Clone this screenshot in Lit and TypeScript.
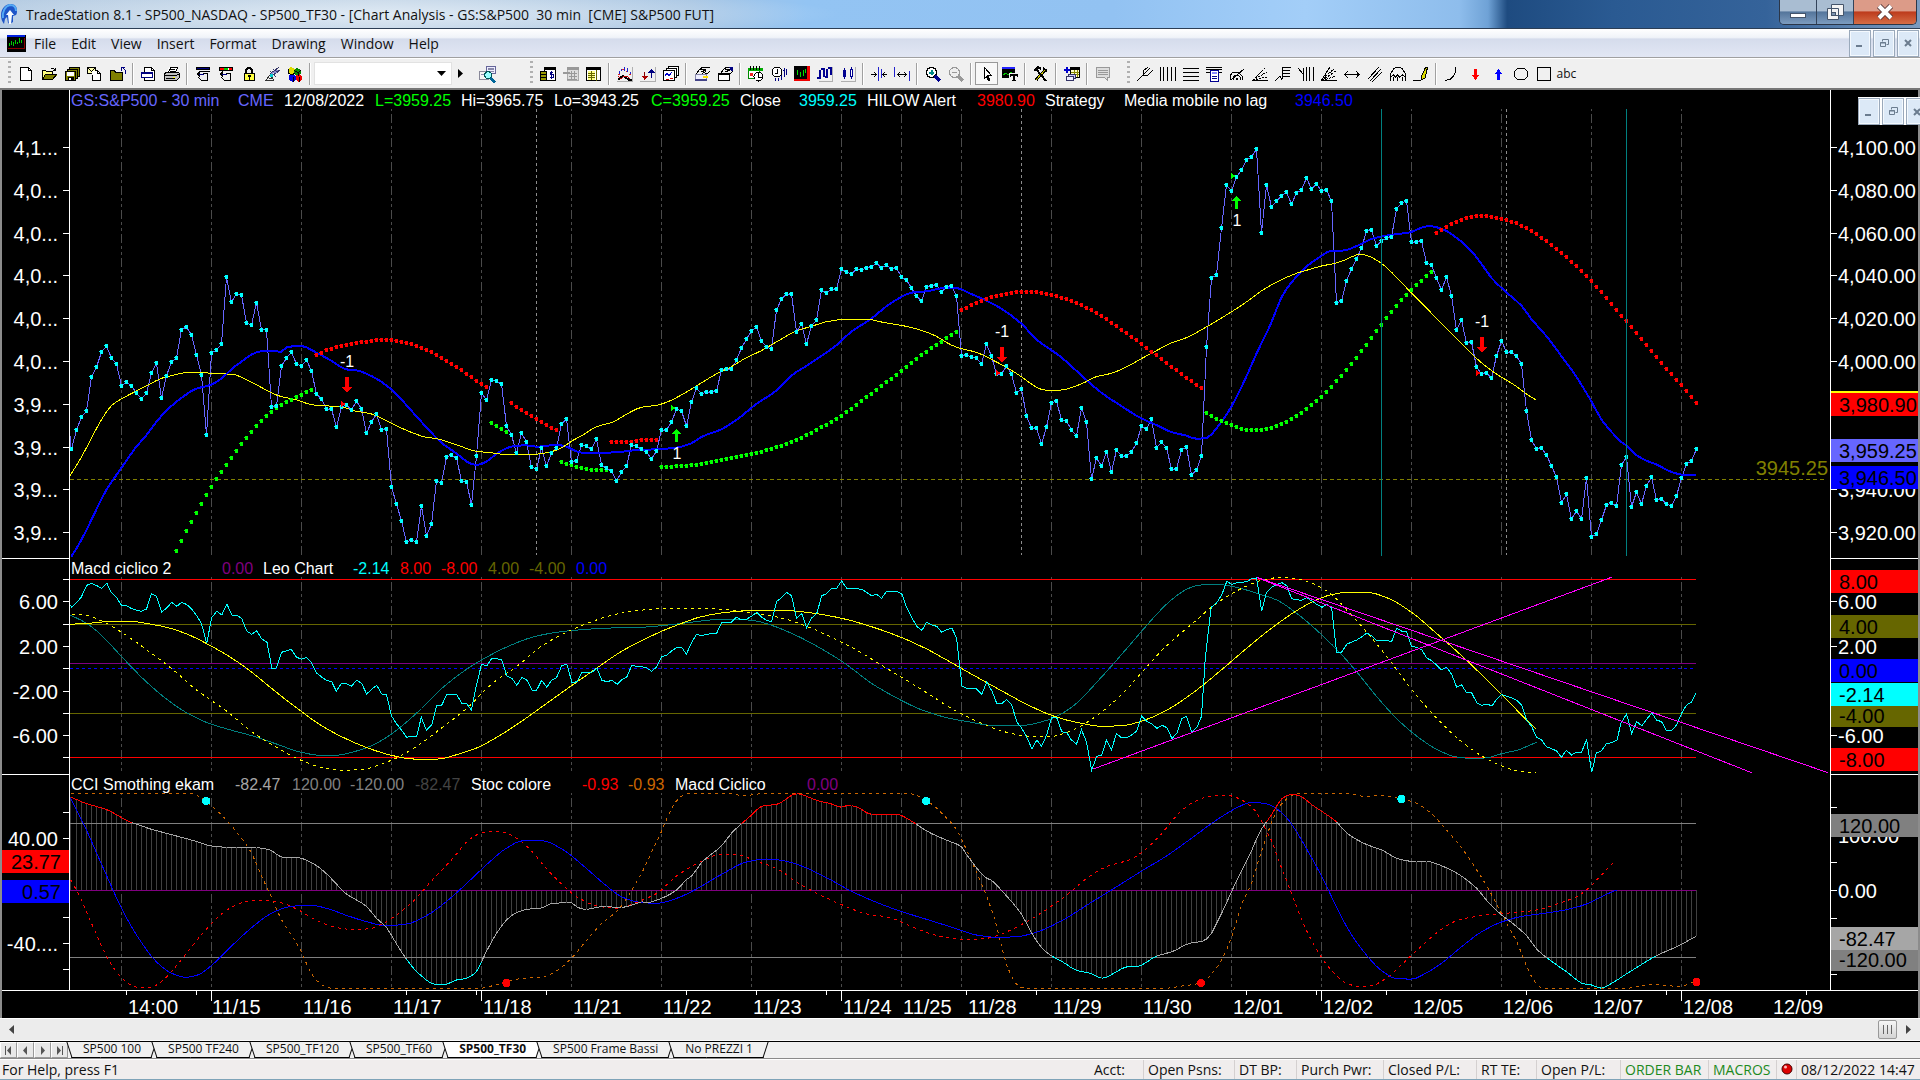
import { LitElement, html, svg, css, type TemplateResult } from "lit";
import { customElement } from "lit/decorators.js";
import { styleMap } from "lit/directives/style-map.js";

type Pt = [number, number];

/* ---------- series helpers ---------- */

// Samples are kept as flat x,y lists in thirds of a plot unit, in blocks that start at `ox`.
const upper = (ox: number, a: number[]): Pt[] => {
  const out: Pt[] = [];
  for (let i = 0; i < a.length; i += 2) out.push([a[i] / 3 + ox, a[i + 1] / 3]);
  return out;
};
const SX = 660 / 1568;
const lower = (ox: number, dy: number, a: number[]): Pt[] => {
  const out: Pt[] = [];
  for (let i = 0; i < a.length; i += 2) out.push([a[i] * SX + ox, a[i + 1] / 3 - dy]);
  return out;
};
const mid = (ox: number, a: number[]) => lower(ox, 8, a);
const low = (ox: number, a: number[]) => lower(ox, 224, a);

const BAR = 5;

// Monotone cubic through the control points, read once per bar.
function perBar(p: Pt[]): Pt[] {
  const n = p.length;
  const d = p.slice(1).map((q, i) => (q[1] - p[i][1]) / (q[0] - p[i][0]));
  const m = p.map((_, i) => {
    if (i === 0) return d[0];
    if (i === n - 1) return d[n - 2];
    return d[i - 1] * d[i] <= 0 ? 0 : (2 * d[i - 1] * d[i]) / (d[i - 1] + d[i]);
  });
  const at = (x: number) => {
    let i = 0;
    while (i < n - 2 && x > p[i + 1][0]) i++;
    const h = p[i + 1][0] - p[i][0];
    const t = (x - p[i][0]) / h;
    const t2 = t * t;
    const t3 = t2 * t;
    return (
      (2 * t3 - 3 * t2 + 1) * p[i][1] + (t3 - 2 * t2 + t) * h * m[i] +
      (3 * t2 - 2 * t3) * p[i + 1][1] + (t3 - t2) * h * m[i + 1]
    );
  };
  const out: Pt[] = [p[0]];
  const end = p[n - 1][0];
  let x = Math.ceil((p[0][0] - 1.5) / BAR) * BAR + 1.5;
  if (x - p[0][0] < 1) x += BAR;
  for (; x < end - 1; x += BAR) out.push([x, at(x)]);
  out.push(p[n - 1]);
  return out;
}

const path = (p: Pt[]) => "M" + p.map(([x, y]) => `${x.toFixed(1)} ${y.toFixed(1)}`).join("L");
const squares = (p: Pt[]) =>
  p.map(([x, y]) => {
    const l = Math.floor(x) - 1;
    const t = Math.round(y) - 2;
    return `M${l} ${t}h3v4h-3zM${l - 1} ${t + 1}h1v1h-1z`;
  }).join("");

/* ---------- price pane ---------- */

const CLOSES = [
  1077,1020,981,963,861,831,786,768,804,822,887,876,888,909,927,909,849,819,924,857,816,804,719,711,735,795,855,1035,
  789,780,762,561,636,611,615,699,705,638,719,719,951,948,828,804,786,822,828,810,843,912,927,957,957,1011,951,945,960,
  933,957,1029,996,972,1020,1017,1191,1242,1293,1356,1350,1356,1248,1338,1302,1173,1179,1101,1095,1104,1173,1176,1245,
  1098,909,930,870,873,
  882,1008,1035,1089,1029,1056,1131,1137,1074,1128,1089,1074,1002,987,1116,1113,1065,1068,1077,1047,1125,1134,1143,1173,
  1146,1128,1065,1068,1077,1086,1107,1083,1020,1020,996,957,963,1008,936,894,912,906,906,903,840,837,837,810,774,747,723,
  711,753,771,777,660,627,612,612,726,702,762,708,690,600,609,597,597,537,546,552,537,540,534,531,519,534,525,537,534,
  561,570,594,618,633,591,588,585,606,591,588,618,798,795,801,804,
  822,762,798,852,852,828,852,909,897,978,1014,1014,1062,1011,939,933,990,993,1020,1038,954,996,1167,1104,1128,1086,1146,
  1080,1098,1098,1086,1059,1008,1017,987,1074,1056,1074,1137,1137,1080,1071,1155,1140,1098,771,564,555,414,285,303,261,
  240,210,201,177,429,285,351,333,318,306,342,309,300,264,297,282,303,300,333,639,633,573,537,507,474,423,420,468,453,
  444,441,357,339,333,456,456,453,519,525,564,600,561,618,720,
  690,759,756,831,852,849,864,798,753,786,786,798,822,963,1050,1077,1074,1095,1128,1161,1239,1212,1287,1263,1287,1164,
  1341,1332,1290,1245,1239,1248,1125,1101,1251,1206,1242,1188,1161,1230,1227,1242,1248,1218,1164,1122,1113,1077,
];
const CLOSE: Pt[] = CLOSES.map((v, i) => [1.5 + BAR * i, v / 3]);

const NO_LAG = perBar([
  ...upper(-70, [214,1400,244,1350,274,1290,319,1200,364,1134,409,1070,439,1036,469,996,499,962,544,924,589,896,634,884,664,866,694,838,724,815,769,787,799,782,844,785,862,771,904,768,949,788,994,812,1039,838,1069,841,1114,858,1174,898,1234,962,1294,1028,1324,1058,1369,1090,1414,1122,1432,1125,1459,1115,1489,1092]),
  ...upper(410, [94,1070,139,1066,169,1070,229,1065,260,1070,289,1084,304,1088,379,1088,439,1084,469,1080,529,1078,589,1073,634,1060,664,1041,724,1018,769,990,829,942,889,902,939,853,979,828,1024,798,1069,766,1114,725,1174,686,1219,649,1264,621,1294,608,1339,604,1399,593,1429,594,1474,612]),
  ...upper(890, [79,632,124,656,184,701,229,748,304,802,364,856,424,908,484,948,544,985,589,1005,634,1026,679,1037,709,1046,739,1044,777,1005,814,950,859,860,889,792,934,698,964,623,994,578,1039,530,1084,498,1114,482,1144,482,1204,462,1234,447,1279,437,1354,426,1384,413,1408,408,1444,416,1489,443]),
  ...upper(1350, [154,483,184,521,214,563,259,607,304,647,334,687,379,738,424,798,469,860,514,934,544,988,574,1025,604,1056,619,1066,649,1095,679,1112,709,1123,754,1146,799,1155,829,1155]),
]);

const CENTERED = perBar([
  ...upper(-70, [210,1157,244,1102,274,1045,304,990,334,947,364,927,409,903,454,880,484,865,514,857,559,848,604,848,649,851,700,853,724,862,769,884,814,908,844,920,889,929,934,944,964,947,1024,950,1060,962,1114,972,1174,1000,1234,1027,1279,1042,1309,1046,1354,1059,1399,1075,1429,1084,1489,1090]),
  ...upper(410, [60,1093,160,1093,214,1085,244,1074,274,1054,314,1032,349,1010,394,998,439,973,484,952,529,946,559,937,604,915,649,888,709,852,754,830,799,803,844,782,889,756,949,723,994,709,1046,694,1099,688,1166,688,1204,696,1264,706,1324,721,1369,739,1414,765,1444,776]),
  ...upper(890, [49,787,94,808,139,832,184,860,214,882,244,898,274,902,304,900,364,882,409,860,454,850,499,831,544,806,589,782,634,759,679,743,739,711,799,675,859,636,904,603,949,577,1009,550,1039,541,1084,528,1129,519,1159,508,1199,493,1219,496,1264,520,1309,561,1354,609,1414,669,1444,701,1489,745]),
  ...upper(1350, [154,790,184,818,229,852,259,870,289,889,319,912,347,929]),
]);

const HIGH_RUNS = [
  upper(-70, [949,795,994,776,1039,765,1114,753,1159,749,1204,756,1264,773,1324,804,1384,840,1444,882,1459,891]),
  upper(410, [94,939,124,960,169,986,214,1013,229,1020]),
  upper(410, [394,1056,439,1056,499,1050,529,1050]),
  upper(890, [4,660,49,639,109,618,184,606,229,606,274,615,334,633,409,669,469,708,544,762,604,807,664,852,724,894]),
  upper(1350, [49,429,79,411,109,396,154,381,184,378,214,381,259,390,319,414,379,453,439,501,514,573,574,642,634,711,694,783,754,852,784,885,829,939]),
].map(perBar);

const LOW_RUNS = [
  upper(-70, [529,1383,544,1353,574,1296,604,1242,634,1191,679,1125,709,1083,754,1026,799,978,844,945,904,915,934,900]),
  upper(-70, [1474,998,1489,1008,1504,1017,1519,1026]),
  upper(410, [244,1116,289,1130,334,1140,379,1140]),
  upper(410, [544,1131,604,1128,664,1122,754,1104,814,1092,874,1077,949,1050,1009,1020,1069,987,1129,945,1189,900,1249,855,1309,807,1369,765,1429,726]),
  upper(890, [739,969,784,993,829,1011,859,1020,904,1020,949,1008,1009,978,1069,933,1114,891,1159,840,1219,765,1264,705,1309,648,1354,600,1414,546]),
].map(perBar);

const DAYS = [51, 141, 231, 321, 411, 501, 591, 681, 771, 831, 891, 981, 1071, 1161, 1251, 1341, 1431, 1521, 1611];
const SESSIONS = [466, 951, 1436];
const CYCLES = [1311, 1556];

type Trade = { x: number; tip: number; tri: Pt; label: string; ly: number };
const SELLS: Trade[] = [
  { x: 277, tip: 303, tri: [271, 314], label: "-1", ly: 271 },
  { x: 932, tip: 273, tri: [926, 283], label: "-1", ly: 241 },
  { x: 1412, tip: 263, tri: [1406, 283], label: "-1", ly: 231 },
];
const BUYS: Trade[] = [
  { x: 607, tip: 339, tri: [601, 318], label: "1", ly: 363 },
  { x: 1167, tip: 106, tri: [1161, 86], label: "1", ly: 130 },
];

/* ---------- MACD pane ---------- */

const LEO: Pt[] = [
  ...mid(-70, [165,163,170,171,180,160,193,142,206,106,218,100,228,106,242,115,254,100,264,127,277,143,289,166,301,167,313,176,325,181,336,184,348,177,360,131,372,139,384,187,396,174,408,157,420,169,432,157,444,164,456,178,468,198,479,222,491,280,503,203,515,184,527,195,539,162,551,195,562,196,574,205,586,243,598,253,610,242,622,267,634,276,646,355,657,354,669,307,681,302,692,298,704,321,716,328,728,322,740,338,752,369,764,381,776,391,788,395,799,424,811,400,823,401,835,409,847,391,859,400,871,432,883,418,895,406,907,432,918,433,930,498,942,521,955,542,966,562,978,559,990,558,1001,502,1013,541,1026,524,1037,468,1049,467,1061,434,1073,433,1085,433,1097,460,1108,460,1120,480,1132,405,1144,343,1156,348,1168,326,1180,326,1192,329,1204,378,1216,385,1228,406,1240,382,1252,391,1264,421,1275,420,1287,391,1299,412,1311,390,1322,383,1335,346,1347,344,1359,398,1371,395,1382,368,1394,367,1406,367,1418,354,1430,391,1442,395,1454,391,1466,403,1478,388,1489,382,1501,346,1513,349]),
  ...mid(570, [0,349,15,353,28,364,40,350,51,320,63,316,75,303,87,293,99,292,110,313,122,279,134,253,146,257,158,253,170,251,182,250,194,217,206,217,217,217,229,202,241,210,253,208,265,199,277,187,289,201,301,212,313,214,325,154,336,143,348,127,360,137,372,205,384,190,396,233,408,204,420,190,432,137,443,131,455,115,467,115,479,93,491,115,503,115,515,116,527,118,539,128,550,137,562,133,574,145,586,123,598,123,610,124,622,132,634,174,646,204,658,230,670,241,681,217,693,225,705,229,717,247,729,239,741,234,752,264,765,408,776,415,788,415,800,417,812,433,824,396,836,423,848,461,860,460,871,449,883,464,895,515,907,535,919,562,931,596,943,570,954,589,966,555,978,503,990,503,1002,545,1014,548,1025,570,1037,582,1049,539,1061,577,1073,661,1085,619,1097,615,1108,571,1120,599,1132,551,1144,563,1156,563,1168,555,1180,543,1192,499,1204,514,1216,522,1228,535,1240,526,1252,533,1264,566,1276,548,1288,505,1298,499,1311,547,1323,532,1334,499,1343,323,1357,172,1370,158,1382,135,1394,94,1406,103,1418,98,1430,97,1442,95,1453,86,1465,84,1477,184]),
  ...mid(1190, [15,128,28,112,40,104,52,98,64,108,75,146,87,149,99,151,111,143,123,153,135,163,147,172,159,163,170,173,182,308,194,306,206,283,218,276,230,270,242,260,254,249,266,258,278,273,289,272,301,272,313,274,325,235,336,243,348,245,360,289,372,292,384,299,396,324,408,332,420,346,431,359,443,352,455,372,467,411,479,405,490,427,503,429,515,458,527,466,539,462,551,468,562,448,574,433,586,439,598,444,610,451,622,466,634,513,645,528,657,562,669,570,681,591,693,596,705,603,716,622,728,601,740,615,752,606,764,606,776,569,788,667,799,609,811,603,823,581,835,578,848,571,858,518,871,492,883,550,895,515,907,527,919,507,931,489,942,510,954,515,966,542,978,542,990,524,1002,489,1013,466,1025,456,1036,430]),
];
const SLOW = perBar([
  ...mid(-70, [165,223,220,219,265,214,312,214,350,221,393,231,444,252,491,281,540,316,586,355,646,416,705,474,764,527,823,567,883,598,930,616,966,625,1010,629,1050,626,1085,614,1132,594,1180,562,1240,513,1299,460,1359,406,1418,354,1478,303]),
  ...mid(570, [0,275,51,244,99,220,146,200,206,187,265,182,348,182,408,189,479,205,550,230,622,263,681,297,741,339,800,381,860,423,919,463,978,496,1037,517,1100,529,1150,526,1204,508,1252,480,1311,431,1382,359,1442,294,1501,234]),
  ...mid(1190, [87,182,130,152,170,134,206,127,254,127,301,143,360,187,420,251,479,317,539,390,598,465,640,518,657,538]),
]);
const LEAD = perBar([
  ...mid(-70, [172,193,200,195,240,212,289,247,348,299,408,356,468,421,539,484,598,545,657,592,716,631,764,652,811,661,859,659,900,645,942,624,990,589,1049,534,1108,476,1168,402,1228,349,1287,288,1347,246,1406,215,1466,192]),
  ...mid(570, [0,181,51,176,110,174,200,178,265,188,336,204,396,229,455,262,515,300,574,346,634,391,693,438,752,484,812,520,871,547,919,558,975,560,1010,549,1050,526,1097,486,1144,434,1180,385,1204,350,1252,286,1311,222,1370,160,1430,115,1480,90]),
  ...mid(1190, [52,82,90,87,125,100,170,133,206,180,254,247,301,319,360,418,420,505,479,575,539,627,590,655,625,666,657,667]),
]);
const CYCLE = perBar([
  ...mid(-70, [165,194,206,220,242,257,289,320,348,396,408,459,456,497,503,523,551,541,598,557,657,582,716,607,764,616,799,616,835,607,883,587,930,552,990,489,1049,416,1097,368,1144,330,1204,291,1264,262,1322,247,1394,238,1478,233]),
  ...mid(570, [0,232,60,226,120,217,182,209,230,208,275,213,313,226,372,257,432,297,491,344,550,400,610,444,670,480,729,503,788,517,835,526,907,526,966,511,1002,491,1037,460,1085,397,1132,331,1180,261,1228,192,1264,148,1300,117,1330,105,1370,103,1420,113]),
  ...mid(1190, [0,133,40,150,87,190,135,241,182,298,230,366,278,441,325,506,372,558,420,598,467,621,500,625,536,624,574,611,610,601,640,586,657,577]),
]);
const TRENDS: Pt[][] = [
  [...mid(570, [1075, 658]), ...mid(1190, [835, 82])],
  [...mid(570, [1465, 82]), ...mid(1190, [1350, 668])],
  [...mid(570, [1465, 82]), ...mid(1190, [1168, 668])],
];

/* ---------- CCI pane ---------- */

const CCI = perBar([
  ...low(-70, [168,741,206,761,254,779,289,803,313,818,330,825,360,838,408,854,468,875,503,888,527,891,598,892,640,899,669,921,705,922,740,938,764,958,788,987,823,1032,847,1050,870,1068,895,1106,918,1132,930,1156,955,1208,990,1265,1037,1304,1055,1304,1085,1290,1108,1285,1132,1265,1150,1218,1168,1175,1192,1127,1216,1096,1252,1078,1287,1074,1311,1060,1359,1058,1375,1075,1394,1078,1430,1070,1478,1072,1513,1060]),
  ...low(570, [0,1055,15,1058,51,1045,87,1020,110,989,122,979,146,938,194,887,217,850,265,795,290,768,325,763,372,731,420,751,455,762,480,772,495,766,515,771,550,793,610,793,646,814,681,843,729,871,764,890,776,914,824,985,836,992,860,1023,907,1094,931,1150,954,1193,978,1218,1002,1234,1037,1261,1073,1271,1097,1285,1120,1274,1156,1251,1180,1250,1228,1218,1264,1205,1311,1178,1335,1175,1355,1155,1370,1120,1394,1057,1418,990,1453,902]),
  ...low(1190, [0,845,28,793,52,746,75,733,95,738,123,764,182,816,206,849,254,884,289,900,330,927,360,934,400,935,431,947,467,969,515,1015,539,1052,574,1095,598,1118,634,1158,657,1197,681,1223,728,1265,770,1302,788,1305,811,1315,835,1300,883,1262,942,1217,990,1190,1036,1159]),
]);
const STOCH = perBar([
  ...low(-70, [168,745,206,842,242,945,289,1075,325,1156,372,1236,408,1270,440,1282,468,1276,503,1246,551,1187,598,1133,646,1089,692,1069,740,1066,776,1075,823,1096,871,1115,918,1127,966,1122,1013,1097,1061,1054,1108,1001,1156,944,1204,894,1240,873,1287,872,1335,897,1382,943,1430,996,1478,1041]),
  ...low(570, [0,1057,40,1060,87,1045,134,1017,194,973,253,936,300,927,336,931,384,948,443,983,503,1024,562,1057,622,1085,681,1108,741,1132,800,1155,848,1162,895,1160,943,1146,1002,1112,1061,1066,1120,1020,1192,963,1252,917,1311,864,1370,810,1420,772,1453,757,1490,762,1525,788,1548,822,1568,862]),
  ...low(1190, [110,895,147,980,170,1040,206,1130,242,1198,289,1262,325,1286,360,1287,396,1268,431,1240,479,1190,527,1145,574,1116,622,1099,669,1091,728,1079,776,1062,811,1040,847,1020]),
]);
const FAST = perBar([
  ...low(-70, [168,990,190,1040,218,1122,254,1220,289,1284,325,1312,355,1314,384,1294,420,1246,468,1170,503,1120,539,1080,586,1055,622,1051,657,1055,705,1077,752,1111,799,1133,847,1139,883,1135,930,1105,978,1058,1025,993,1073,929,1120,864,1156,845,1192,846,1228,865,1264,905,1299,957,1335,1003,1370,1040,1418,1068,1466,1075,1502,1063]),
  ...low(570, [0,1053,40,1030,87,978,146,934,190,914,230,914,277,934,325,956,372,996,420,1030,479,1064,539,1092,590,1102,646,1130,700,1155,764,1168,812,1167,848,1157,895,1131,943,1097,990,1057,1025,1024,1061,985,1108,950,1168,927,1204,895,1240,850,1276,795,1311,759,1347,741,1394,736,1430,750,1465,787]),
  ...low(1190, [10,830,25,865,50,950,75,1030,99,1110,135,1200,170,1262,206,1300,240,1310,266,1307,301,1284,336,1244,384,1188,431,1138,467,1112,515,1099,562,1092,610,1087,657,1080,705,1062,752,1040,776,1020,811,975,843,934]),
]);
const SWING = perBar([
  ...low(-70, [168,730,455,730,480,745,503,768,539,812,574,865,598,910,622,980,646,1045,669,1110,692,1155,716,1205,740,1272,764,1304,788,1315,1140,1315,1168,1308,1204,1296,1240,1285,1287,1281,1322,1263,1359,1223,1394,1170,1430,1120,1466,1083,1489,1045,1513,995]),
  ...low(570, [0,980,28,905,51,845,75,775,99,738,122,730,206,731,250,737,290,731,640,731,665,740,693,762,729,805,752,838,776,900,800,968,824,1040,848,1130,866,1225,883,1280,905,1313,930,1315,1245,1315,1288,1308,1335,1298,1358,1272,1382,1230,1406,1160,1430,1060,1453,1000,1465,950]),
  ...low(1190, [10,880,30,810,52,760,75,737,90,731,206,731,250,739,290,737,336,747,372,760,408,792,443,840,479,893,503,937,530,990,555,1045,586,1120,610,1175,634,1250,650,1290,670,1315,870,1315,930,1303,1002,1310,1020,1300,1036,1296]),
]);
const ZERO = 116;
const UP = 49;
const DOWN = 183;
const cciPart = (test: (y: number) => boolean) =>
  CCI.slice(1).map((q, i) => {
    const p = CCI[i];
    return test((p[1] + q[1]) / 2) ? path([p, q]) : "";
  }).join("");
const CCI_HIGH = cciPart((y) => y < UP);
const CCI_LOW = cciPart((y) => y > DOWN);
const CCI_MID = cciPart((y) => y >= UP && y <= DOWN);
const CCI_BARS = CCI.map(([x, y]) => `M${x.toFixed(1)} ${ZERO}V${y.toFixed(1)}`).join("");
const TOP_DOTS = [...low(-70, [490, 753]), ...low(570, [680, 753]), ...low(1190, [336, 747])];
const LOW_DOTS = [...low(-70, [1203, 1299]), ...low(570, [1333, 1299]), ...low(1190, [1037, 1296])];

/* ---------- axes ---------- */

type Mark = { y: number; text?: string; tone?: string };
const PRICE_L: Mark[] = ["4,1...", "4,0...", "4,0...", "4,0...", "4,0...", "4,0...", "3,9...", "3,9...", "3,9...", "3,9..."]
  .map((text, i) => ({ y: 57 + Math.round(i * 42.8), text }));
const PRICE_R: Mark[] = [
  ...["4,100.00", "4,080.00", "4,060.00", "4,040.00", "4,020.00", "4,000.00", "", "", "3,940.00", "3,920.00"]
    .map((text, i) => ({ y: 57 + Math.round(i * 42.8), text }))
    .filter((m) => m.text),
  { y: 312, text: "", tone: "yellow" },
  { y: 314, text: "3,980.90", tone: "red" },
  { y: 360, text: "3,959.25", tone: "violet" },
  { y: 387, text: "3,946.50", tone: "blue" },
];
const MACD_L: Mark[] = [
  { y: 21 }, { y: 43, text: "6.00" }, { y: 66 }, { y: 88, text: "2.00" }, { y: 110 }, { y: 133, text: "-2.00" },
  { y: 155 }, { y: 177, text: "-6.00" }, { y: 199 },
];
const MACD_R: Mark[] = [
  { y: 43, text: "6.00" }, { y: 88, text: "2.00" }, { y: 177, text: "-6.00" },
  { y: 23, text: "8.00", tone: "red" }, { y: 68, text: "4.00", tone: "olive" }, { y: 112, text: "0.00", tone: "blue" },
  { y: 157, text: "-4.00", tone: "olive" }, { y: 136, text: "-2.14", tone: "cyan" }, { y: 201, text: "-8.00", tone: "red" },
];
const CCI_L: Mark[] = [
  { y: 38 }, { y: 64, text: "40.00" }, { y: 143 }, { y: 169, text: "-40...." }, { y: 195 },
  { y: 87, text: "23.77", tone: "red" }, { y: 117, text: "0.57", tone: "blue" },
];
const CCI_R: Mark[] = [
  { y: 33 }, { y: 61, text: "100.00" }, { y: 88 }, { y: 116, text: "0.00" }, { y: 144 }, { y: 172 }, { y: 200 },
  { y: 51, text: "120.00", tone: "gray" }, { y: 185, text: "-120.00", tone: "gray" }, { y: 164, text: "-82.47", tone: "silver" },
];

const DATES: [number, string][] = [
  [58, "14:00"], [142, "11/15"], [233, "11/16"], [323, "11/17"], [413, "11/18"], [503, "11/21"], [593, "11/22"],
  [683, "11/23"], [773, "11/24"], [833, "11/25"], [898, "11/28"], [983, "11/29"], [1073, "11/30"], [1163, "12/01"],
  [1253, "12/02"], [1343, "12/05"], [1433, "12/06"], [1523, "12/07"], [1613, "12/08"], [1703, "12/09"],
];
const MINOR = [56, 126, 336, 406, 476, 616, 686, 756, 896, 966, 1176, 1246, 1316, 1456, 1526, 1596, 1736];
const MAJOR = [141, 411, 771, 1251, 1611];

type Item = [string, string];
const PRICE_HEAD: Item[] = [
  ["GS:S&P500 - 30 min", "violet"], ["CME", "violet"], ["12/08/2022", "white"], ["L=3959.25", "lime"],
  ["Hi=3965.75", "white"], ["Lo=3943.25", "white"], ["C=3959.25", "lime"], ["Close", "white"], ["3959.25", "cyan"],
  ["HILOW Alert", "white"], ["3980.90", "red"], ["Strategy", "white"], ["Media mobile no lag", "white"], ["3946.50", "blue"],
];
const MACD_HEAD: Item[] = [
  ["Macd ciclico 2", "white"], ["0.00", "purple"], ["Leo Chart", "white"], ["-2.14", "cyan"], ["8.00", "red"],
  ["-8.00", "red"], ["4.00", "olive"], ["-4.00", "olive"], ["0.00", "blue"],
];
const CCI_HEAD: Item[] = [
  ["CCI Smothing ekam", "white"], ["-82.47", "silver"], ["120.00", "gray"], ["-120.00", "gray"], ["-82.47", "dim"],
  ["Stoc colore", "white"], ["-0.93", "red"], ["-0.93", "orange"], ["Macd Ciclico", "white"], ["0.00", "purple"],
];

/* ---------- toolbar icons, 16 x 16 ---------- */

const K = "#000";
const line = (d: string, c = K, w = 1) => svg`<path d=${d} fill="none" stroke=${c} stroke-width=${w}></path>`;
const fill = (d: string, c = K) => svg`<path d=${d} fill=${c}></path>`;
const box = (x: number, y: number, w: number, h: number, f = "#fff", s = K) =>
  svg`<rect x=${x + 0.5} y=${y + 0.5} width=${w - 1} height=${h - 1} fill=${f} stroke=${s}></rect>`;

const ICON: Record<string, () => unknown> = {
  new: () => svg`${fill("M2 1h9l3 3v11H2z", "#fff")}${line("M2.5 1.5h8l3 3v10h-11zM10.5 1.5v3h3")}`,
  open: () => svg`${fill("M1 5h4l1 1h6v3H4l-3 5z", "#ffff80")}${fill("M4 9h12l-4 5H1z", "#808000")}${line("M1.5 13.5v-9h3l1 1h6v3M4.5 8.5h11l-4 5h-10zM9.5 2.5h3l2 2M14.5 1.5v3h-3")}`,
  save: () => svg`${box(5, 1, 11, 10, "#808000")}${box(3, 3, 11, 10, "#808000")}${box(1, 5, 11, 10, "#808000")}${fill("M3 6h7v4H3z", "#fff")}${fill("M4 11h6v4H4z")}${fill("M5 12h2v2H5z", "#fff")}`,
  mail: () => svg`${box(0, 1, 9, 7, "#ffffb0")}${line("M.5 1.5l4 4 4-4")}${fill("M5 5h6l3 3v7H5z", "#fff")}${line("M5.5 14.5v-6M5.5 14.5h8v-7l-3-3h-2M10.5 4.5v3h3")}`,
  folder: () => svg`${fill("M0 5h5l1 2h7v8H0z", "#808000")}${line("M.5 14.5v-10h4l1 2h7v8z")}${line("M15.5 7.5v-3l-3-3M11.5 4.5v-3h3", "#000080")}`,
  page: () => svg`${fill("M3 1h8l3 3v11H3z", "#fff")}${line("M3.5 1.5h7l3 3v10h-10zM10.5 1.5v3h3")}${box(0, 6, 12, 6, "#fff", "#000080")}${fill("M0 6h12v2H0z", "#000080")}`,
  print: () => svg`${fill("M5 1h9l-2 6H3z", "#fff")}${line("M4.5 6.5l2-5h7l-2 5M6 3.5h5M5.5 5.5h5")}${fill("M1 7h14v5l-3 3H1z", "#c0c0c0")}${line("M.5 7.5l2-1h12l1 1v4l-3 3h-12zM.5 9.5h12l3-2M2 12.5h9")}${fill("M9 11h2v1H9z", "#ff0")}`,
  undo1: () => svg`${box(1, 1, 14, 3, "#000080", K)}${line("M4 5.500h11M7.500 7.500h5v7h-6l-3-3")}${fill("M1 8l4-3v6z")}${line("M4 8.500h5", "#000080")}`,
  undo2: () => svg`${box(1, 1, 14, 4, "#fff", K)}${fill("M2 2h4v2H2z", "#f00")}${fill("M6 2h4v2H6z", "#0c0")}${fill("M11 2h3v2h-3z", "#f00")}${line("M7.500 7.500h5v7h-6l-3-3")}${fill("M1 8l4-3v6z")}${line("M4 8.500h5", "#000080")}`,
  lock: () => svg`${line("M5 8V4L6.500 2h3L11 4V8", K, 2)}${box(3, 7, 11, 8, "#ffff40")}${fill("M7 9h3v2H9v3H8v-3H7z")}`,
  dish: () => svg`${line("M1 14.500h9M2 14l4-5 4 5M5 12h4", "#333")}${line("M6 8l9-7M8 10l8-6M6 5l6 6M9 3l5 4", "#336")}${line("M8 6l5 1M7 8l7-4", "#8888cc")}${fill("M6 8h3v3H6z", "#0cc")}`,
  cubes: () => svg`${fill("M1 3l3-2 4 2v4L5 9 1 7z", "#dd0")}${fill("M7 4l3-2 4 2v4l-3 2-4-2z", "#080")}${fill("M2 9l3-1 4 2v4l-3 2-4-2z", "#00d")}${fill("M9 9l3-1 3 2v4l-3 2-3-2z", "#e00")}${line("M1.500 3v4l3.500 2 3-2M7 4.500l4 2 3-2M11 6.500V10M6 11v5M12 11v5")}`,
  find: () => svg`${box(1, 5, 9, 8, "#f4f4f4", "#889")}${box(7, 1, 9, 7, "#eef", "#669")}${line("M9 3.500h5M9 5.500h5M3 8.500h4", "#88a")}<circle cx="9" cy="9" r="3" fill="#9ff" stroke="#055"></circle>${line("M11 11.500l4 4", "#069", 2)}`,
  money: () => svg`${box(4, 1, 12, 14, "#fff")}${fill("M4 1h12v3H4z")}${fill("M1 6h6v2H1zM1 9h6v2H1zM1 12h6v2H1z", "#990")}${line("M.500 5.500h6v9h-6zM1 8.500h6M1 11.500h6")}${line("M13 6.500h-3v2h3v3h-3M11.500 5v8", "#000080")}`,
  gridoff: () => svg`${box(4, 1, 12, 14, "#ddd", "#aaa")}${fill("M4 1h12v3H4z", "#999")}${fill("M0 6h7v2H0z", "#999")}${line("M6 7.500h8M6 10.500h8M8.500 5v9M11.500 5v9M4 13.500h10", "#999")}`,
  table: () => svg`${box(0, 1, 15, 14, "#fff")}${fill("M0 1h15v3H0z")}${fill("M2 5h7v9H2z", "#ff8")}${line("M2 7.500h7M2 9.500h7M2 11.500h7M5.500 5v9M10.500 4v11", "#660")}`,
  wave: () => svg`${line("M0 15.500h15.500V1", "#b0b0b0")}${line("M2.500 8v-3M4.500 5V3M7.500 5V1M10.500 6V2M13.500 9V6", "#22c")}${line("M1 8.500h2M5 3.500h2M9 5.500h1M12 8.500h2", "#d22")}${line("M1 14l3-3 2-1 2 1 4 3h3", K, 2)}${line("M1 10l3 3 3-3 3 0 3 3", "#b00")}`,
  updown: () => svg`${line("M0 15.500h15.500V1", "#b0b0b0")}${line("M4.500 6v6", "#800")}${fill("M2 10h6l-3.500 4z", "#a00")}${line("M11.500 12V4", "#000080")}${fill("M8 7h7l-3.500-4z", "#000080")}`,
  stack: () => svg`${box(5, 0, 11, 10)}${box(3, 2, 11, 10)}${box(0, 4, 12, 11)}${line("M2 10l2-3 2 3 3-4", "#00c")}${line("M3 13.500h3M7 12.500h3", "#c00")}`,
  props: () => svg`${box(1, 8, 12, 7, "#eef", "#88a")}${line("M2 8l4-5 3-2h5l2 1v3l-3 3-2-1M6 4l6-1M7 6l5-2M8 7.500l4-2")}${fill("M9 10h5v2H9z", "#fd0")}${fill("M1 13h12v2H1z", "#448")}`,
  prop2: () => svg`${box(1, 7, 12, 8)}${fill("M1 7h12v2H1z")}${line("M4 7l3-4 3-2h4l2 2v2l-3 3-2-1M8 4l5-1M8 6l5-2")}${fill("M12 1h4v4h-2z", "#000080")}`,
  cal: () => svg`${box(0, 2, 12, 11, "#fff", "#080")}${fill("M0 2h15v3H0z", "#0a0")}${line("M2.500 0v4M5.500 0v4M8.500 0v4M11.500 0v4")}${fill("M2 7h3v3H2z", "#e22")}<circle cx="10.500" cy="10.500" r="4.500" fill="#fff" stroke="#000"></circle>${line("M10.500 7v4h3")}`,
  clock: () => svg`<circle cx="6" cy="6" r="5" fill="#fff" stroke="#000"></circle>${line("M6.500 3v4h-3")}${line("M4.500 12v3M7.500 12v3M10.500 9v5M13.500 2v9M15.500 3v6M12 4.500h2", "#000080")}`,
  chart: () => svg`${fill("M0 0h16v15H0z", "#e00")}${fill("M0 0h13v13H0z")}${line("M3.500 4v5M6.500 6v5M9.500 4v6M11.500 3v4", "#0d0")}`,
  notes: () => svg`${line("M2 15.500h13.500V1", "#b0b0b0")}${fill("M2 4h2v9H2zM6 2h2v9H6zM9 3h2v9H9zM13 1h2v8h-2zM0 11h3v2H0zM4 2h3v2H4zM8 10h3v2H8zM11 1h3v2h-3z", "#000090")}`,
  candle: () => svg`${line("M1 15.500h14.500V1", "#b0b0b0")}${line("M4.500 2v11M11.500 1v12", "#000090")}${fill("M3 4h3v7H3z", "#000090")}${box(10, 3, 3, 8, "#fff", "#000090")}`,
  squeeze: () => svg`${line("M7.500 1v14", "#22c")}${line("M10.500 3v9", "#22c")}${line("M0 8.500h5M11 8.500h5M3 6l2.500 2.500L3 11M14 6l-2 2.500 2 2.500")}`,
  stretch: () => svg`${line("M.500 1v10M15.500 5v10", "#22c")}${line("M3 8.500h10M6 6L3.500 8.500 6 11M10 6l2.500 2.500L10 11")}`,
  zoomin: () => svg`<circle cx="6.500" cy="6.500" r="5" fill="#fff" stroke="#000" stroke-width="1.500"></circle>${line("M4 6.500h5M6.500 4v5", "#088", 2)}${line("M10 10l5 5", "#000090", 3)}`,
  zoomout: () => svg`<circle cx="6.500" cy="6.500" r="5" fill="#eee" stroke="#999"></circle>${line("M4 6.500h5", "#999")}${line("M10 10l5 5", "#999", 3)}`,
  pointer: () => svg`${fill("M5 1l8 8H9l2 5-2 1-2-5-2 2z", "#fff")}${line("M5.500 1.500v11l2-2 2 4h1v-1l-2-4h4z")}`,
  textchart: () => svg`${fill("M0 1h13v11H0z")}${fill("M0 1h13v2H0z", "#22f")}${line("M1 9l3-2 2 2 4-3", "#0c0")}${fill("M7 7h9v9H7z", "#f0f0f0")}${fill("M8 8h8v3h-1v-1h-2v4h1v1h-4v-1h1v-4H9v1H8z")}`,
  tools: () => svg`${line("M3 14L12 4", K, 3)}${line("M3 14L12 4", "#cc0", 1)}${line("M3 3l10 12", K, 2)}${line("M1 5l4-4 3 2M10 2l4 3", K, 2)}`,
  report: () => svg`${box(6, 1, 10, 11, "#ffc")}${fill("M7 2h8v2H7z")}${line("M7 6.500h8M7 8.500h8M10.500 4v7M13.500 4v7", "#880")}${line("M0 4h6M3 1v6", "#00c", 2)}${box(4, 8, 8, 5, "#ccf", "#336")}${box(2, 10, 8, 5, "#eef", "#336")}`,
  memo: () => svg`${fill("M1 1h14v11h-3v3l-3-3H1z", "#ddd")}${line("M1.500 1.500h13v10h-2v3l-3-3h-8zM3 4.500h10M3 6.500h10M3 8.500h10", "#999")}`,
  fork: () => svg`${line("M0 15L6 9M6 9l5 0 5-5M6 9V5l5-4M6 9l7-7")}`,
  vlines: () => svg`${line("M.500 1v14M3.500 1v14M7.500 1v14M11.500 1v14M15.500 1v14")}`,
  hlines: () => svg`${line("M0 2.500h16M0 6.500h16M0 10.500h16M0 14.500h16")}`,
  calc: () => svg`${line("M0 1.500h16M0 3.500h16M0 6.500h16")}${box(4, 4, 9, 12, "#fff", "#000090")}${fill("M6 6h5v2H6z", "#88f")}${line("M6 10.500h5M6 12.500h5", "#000090")}`,
  arcs: () => svg`${line("M1 14V10l3-4h5l4 4v4M4 14v-3l2-2h3l2 2v3M2 14L15 3")}${line("M7 14v-2h1v2")}`,
  fan: () => svg`${line("M0 14.500h15.500")}<path d="M1 14L14 1M1 14L15 6M1 14l14-3" fill="none" stroke="#000" stroke-dasharray="2 1"></path>`,
  steps: () => svg`${line("M0 15l5-5 2 4M7.500 13V1M7.500 1.500h8M8 4.500h7M8 7.500h7M8 10.500h7")}`,
  vsplit: () => svg`${line("M0 2l5 6M5.500 2v13M8.500 1v14M11.500 1v14M15.500 1v14")}`,
  gann: () => svg`${line("M0 14.500h16M0 15L9 1")}<path d="M0 15L15 5M0 15L15 10M1 13L13 3" fill="none" stroke="#000" stroke-dasharray="3 1"></path>`,
  width: () => svg`${line("M1 8.500h14M4 5L1 8.500 4 12M12 5l3 3.500L12 12")}`,
  para: () => svg`${line("M1 13L12 1M3 15L14 3M5 16L15 6")}`,
  arch: () => svg`${line("M.500 15V8l3-5 3-2h3l3 2 3 5v7M.500 11l3-2 2 2 2-2 2 2 3-2 3 2M3.500 11v4M7.500 11v4M12.500 11v4")}`,
  pencil: () => svg`${fill("M8 11L12 1h3l-3 11-3 2z", "#dd0")}${line("M8 11L12.500 1.500h2L12 12l-4 2zM0 14.500h8")}`,
  curve: () => svg`${line("M11.500 1v5l-2 4-3 3-5 1.500")}`,
  down: () => svg`${fill("M7 3h3v6h2l-3.500 5L5 9h2z", "#f00")}`,
  up: () => svg`${fill("M7 14h3V8h2L8.500 3 5 8h2z", "#00f")}`,
  oval: () => svg`<ellipse cx="8" cy="8" rx="7" ry="6" fill="none" stroke="#000"></ellipse>`,
  rect: () => svg`${line("M1.500 1.500h13v13h-13z")}`,
};

const TOOLS_A = [["new", "open", "save", "mail", "folder"], ["page", "print"], ["undo1", "undo2", "lock", "dish", "cubes"]];
const TOOLS_B = [
  ["money", "gridoff", "table"], ["wave", "updown", "stack"], ["props", "prop2"],
  ["cal", "clock", "chart", "notes", "candle"], ["squeeze", "stretch"], ["zoomin", "zoomout"],
  ["pointer", "textchart"], ["tools"], ["report"], ["memo"],
];
const TOOLS_C = [
  ["fork", "vlines", "hlines", "calc", "arcs", "fan", "steps", "vsplit", "gann", "width", "para", "arch", "pencil"],
  ["curve", "down", "up", "oval", "rect", "abc"],
];

const MENU = ["File", "Edit", "View", "Insert", "Format", "Drawing", "Window", "Help"];
const SHEETS = ["SP500 100", "SP500 TF240", "SP500_TF120", "SP500_TF60", "SP500_TF30", "SP500 Frame Bassi", "No PREZZI 1"];

@customElement("app-root")
export class AppRoot extends LitElement {
  static styles = css`
    :host { display: block; }
    * { box-sizing: border-box; }
    button { font: inherit; color: inherit; padding: 0; margin: 0; border: 0; background: none; }
    svg { display: block; }
    .app {
      display: flex; flex-direction: column; height: 100vh; overflow: hidden;
      font-family: "Open Sans", "Noto Sans", sans-serif; font-size: 14px; color: #111; background: #f0f0f0;
    }

    .title {
      display: flex; align-items: flex-start; height: 29px; flex: none; padding-right: 3px; border-bottom: 1px solid #2c3e55;
      background:
        radial-gradient(ellipse 460px 26px at 380px 14px, rgb(235 243 250 / 75%), transparent),
        linear-gradient(90deg, #b4cbe2 0, #bdd0e3 20%, #a6c4e2 36%, #93c4f3 42%, #92c2f2 58%, #a3cef8 68%, #8ebdec 76%,
          #6fa2d6 77.5%, #1e4b80 78.5%, #2a5a92 84%, #35639a 92%, #7c9cc0 100%);
    }
    .logo { margin: 3px 8px 0 1px; }
    .name { flex: 1; line-height: 30px; height: 28px; white-space: pre; }
    .caption { display: flex; height: 25px; border: 1px solid #2b3648; border-top: 0; border-radius: 0 0 5px 5px; overflow: hidden; }
    .caption button { display: grid; place-items: center; width: 37px; border-right: 1px solid #33435a; background: linear-gradient(#a9bdd2 45%, #54759b 50%, #7d9cbf); }
    .caption .close { width: 62px; border-right: 0; background: linear-gradient(#dc9b88 45%, #bd3b1c 50%, #d66d45); }

    .menubar { display: flex; align-items: center; height: 29px; flex: none; border-bottom: 1px solid #a0a0a0; background: linear-gradient(#fff 0, #f0f3f9 30%, #d5dcec 36%, #e2e7f4 100%); }
    .menubar nav { display: flex; flex: 1; gap: 15px; margin-left: 8px; padding-top: 2px; }
    .menubar nav button { line-height: 24px; }
    .app-icon { margin-left: 7px; }
    .mdi { display: flex; gap: 2px; }
    .mdi button { display: grid; place-items: center; width: 22px; height: 27px; border: 1px solid #9aa9bb; background: #dce9f7; box-shadow: inset 0 0 0 1px #f4f9fe; }
    .menubar .mdi { margin-right: 1px; }

    .tools { display: flex; align-items: center; height: 32px; flex: none; padding-left: 8px; border-top: 1px solid #fff; border-bottom: 2px solid #777; background: #f0f0f0; }
    .grip { width: 3px; height: 25px; margin-right: 3px; background: repeating-linear-gradient(#b0b0b0 0 2px, transparent 2px 5px); }
    .sep { width: 2px; height: 22px; margin: 0 3px; flex: none; border-left: 1px solid #a0a0a0; border-right: 1px solid #fff; }
    .tool { display: grid; place-items: center; width: 23px; height: 23px; flex: none; }
    .tool.pressed { border: 1px solid #999; background: #f8f8f8; }
    .tool.abc { font-size: 12px; }
    .combo { position: relative; width: 138px; height: 23px; }
    .combo select { width: 100%; height: 100%; appearance: none; border: 1px solid #e2e2e2; background: #fff; }
    .combo svg { position: absolute; right: 5px; top: 9px; pointer-events: none; }
    .play { width: 18px; }
    .find { margin-left: 5px; }
    .gap-b { margin-left: 32px; }
    .gap-c { margin-left: 13px; }

    .chart {
      position: relative; flex: 1; min-height: 0; display: grid; padding: 0 2px; background: #8c8c8c;
      grid-template-columns: 68px minmax(0, 1fr) 88px;
      grid-template-rows: minmax(0, 468fr) minmax(0, 216fr) minmax(0, 216fr) 28px;
      font-family: "Liberation Sans", Arial, sans-serif; font-size: 20px; color: #fff;
    }
    .axis { position: relative; background: #000; overflow: hidden; }
    .axis.left { border-right: 1px solid #fff; }
    .axis.right { border-left: 1px solid #fff; }
    .axis.ruled::before { content: ""; position: absolute; inset: 0 0 auto 0; height: 1px; background: #fff; }
    .mark { position: absolute; left: 0; right: 0; display: flex; align-items: center; height: 23px; margin-top: -11px; line-height: 21px; }
    .mark b { font-weight: 400; padding-top: 2px; }
    .mark i { width: 6px; height: 1px; background: #fff; flex: none; }
    .left .mark { justify-content: flex-end; gap: 5px; }
    .right .mark { gap: 1px; }
    .mark.boxed { color: #000; }
    .left .mark.boxed { padding-right: 8px; }
    .right .mark.boxed { padding-left: 8px; }
    .bg-red { background: #f00; } .bg-blue { background: #00f; } .bg-violet { background: #66f; }
    .bg-olive { background: #660; } .bg-cyan { background: #0ff; } .bg-gray { background: #808080; }
    .bg-silver { background: #a6a6a6; } .bg-yellow { background: #ff0; }

    .pane { position: relative; display: grid; min-height: 0; background: #000; overflow: hidden; }
    .pane > * { grid-area: 1 / 1; }
    .pane svg { width: 100%; height: 100%; }
    .pane path, .pane line { vector-effect: non-scaling-stroke; }
    .legend { display: grid; align-self: start; z-index: 1; padding: 1px 0 0 1px; font-size: 16px; line-height: 20px; white-space: nowrap; }
    .legend.price { grid-template-columns: 167px 46px 91px 86px 93px 97px 89px 59px 68px 110px 68px 79px 171px auto; }
    .legend.macd { grid-template-columns: 151px 41px 90px 47px 41px 47px 41px 47px auto; }
    .legend.cci { grid-template-columns: 164px 57px 58px 65px 56px 111px 46px 47px 132px auto; }
    .white { color: #fff; } .violet { color: #66f; } .lime { color: #0f0; } .cyan { color: #0ff; } .red { color: #f00; }
    .blue { color: #00f; } .purple { color: #800080; } .olive { color: #660; } .silver { color: #a6a6a6; }
    .gray { color: #808080; } .dim { color: #444; } .orange { color: #c60; }
    .note { position: absolute; width: 24px; margin: -8px 0 0 -12px; text-align: center; font-size: 16px; line-height: 18px; }
    .level { position: absolute; right: 2px; margin-top: -22px; line-height: 23px; color: #808000; }

    .corner { background: #000; border-top: 1px solid #fff; }
    .time { position: relative; background: #000; border-top: 1px solid #fff; white-space: nowrap; }
    .time span { position: absolute; top: 4px; line-height: 24px; }
    .time i { position: absolute; top: 0; width: 1px; height: 4px; background: #fff; }
    .time i.major { height: 10px; }
    .clip { position: absolute; inset: 0 0 auto auto; width: 80px; height: 40px; overflow: hidden; }
    .floating { position: absolute; top: 7px; right: -8px; padding-top: 1px; background: #fff; }

    .scroll { display: flex; align-items: center; height: 23px; flex: none; padding: 0 1px 0 2px; border-bottom: 1px solid #fafafa; background: #ececec; border-top: 1px solid #fff; }
    .scroll button { width: 20px; display: grid; place-items: center; }
    .scroll input { flex: 1; min-width: 0; height: 20px; margin: 0 2px 0 0; appearance: none; background: transparent; }
    .scroll input::-webkit-slider-thumb {
      appearance: none; width: 19px; height: 19px; border: 1px solid #999; border-radius: 2px;
      background: linear-gradient(90deg, transparent 4px, #666 4px 5px, transparent 5px 8px, #666 8px 9px, transparent 9px 12px, #666 12px 13px, transparent 13px) 0 4px / 100% 9px no-repeat, linear-gradient(#f6f6f6, #d4d4d4);
    }
    .sheets { display: flex; height: 18px; flex: none; border-top: 1px solid #000; border-bottom: 1px solid #8a8a8a; background: #f0f0f0; font-size: 12px; }
    .nav { display: grid; place-items: center; width: 17px; border: 1px solid #999; border-left-color: #fff; border-top-color: #fff; background: #e8e8e8; }
    .tabs { display: flex; margin-left: 1px; }
    .tab { position: relative; z-index: 0; padding: 0 13px 0 14px; line-height: 14px; height: 16px; padding-bottom: 2px; white-space: nowrap; }
    .tab::before, .tab::after { content: ""; position: absolute; z-index: -1; top: 0; bottom: 0; background: #f0f0f0; border-bottom: 1px solid #000; }
    .tab::before { left: 0; right: 40%; border-left: 1px solid #000; transform: skewX(18deg); }
    .tab::after { right: 0; left: 40%; border-right: 1px solid #000; transform: skewX(-18deg); }
    .tab.on { font-weight: 700; }
    .tab.on::before, .tab.on::after { background: #fff; }

    .status { display: grid; height: 21px; flex: none; align-items: stretch; border-top: 1px solid #fff; border-bottom: 1px solid #7fa3b8; background: #f0eded; line-height: 20px; white-space: nowrap;
      grid-template-columns: minmax(0, 1fr) 51px 91px 62px 87px 93px 60px 84px 88px 68px 20px 124px; }
    .status span { height: 19px; padding-left: 4px; border-left: 1px solid #d4d0d0; }
    .status span:nth-child(-n + 2) { border-left: 0; padding-left: 2px; }
    .status .ok { color: #1d8a1d; }
    .status .bead { display: grid; place-items: center; padding: 0; }
  `;

  private icon(name: string, size = 16) {
    return svg`<svg width=${size} height=${size} viewBox="0 0 16 16" shape-rendering="crispEdges" aria-hidden="true">${ICON[name]()}</svg>`;
  }

  private groups(list: string[][]) {
    return list.map((g, i) => html`
      ${i ? html`<div class="sep"></div>` : ""}
      ${g.map((n) => n === "abc"
        ? html`<button class="tool abc">abc</button>`
        : html`<button class="tool ${n === "pointer" ? "pressed" : ""}" aria-label=${n}>${this.icon(n)}</button>`)}
    `);
  }

  private mdi() {
    return html`
      <button aria-label="Minimize chart"><svg width="10" height="10"><path d="M1 7h6v2H1z" fill="#6b7c8f"></path></svg></button>
      <button aria-label="Restore chart"><svg width="11" height="11"><path d="M3.500 3.500v-2h6v5h-2M1.500 4.500h5v4h-5zM1 5h6" fill="none" stroke="#6b7c8f"></path></svg></button>
      <button aria-label="Close chart"><svg width="10" height="10"><path d="M2 2l6 6M8 2l-6 6" stroke="#6b7c8f" stroke-width="2"></path></svg></button>
    `;
  }

  private axis(side: "left" | "right", marks: Mark[], h: number, ruled: boolean) {
    return html`<div class="axis ${side} ${ruled ? "ruled" : ""}">
      ${marks.map((m) => {
        const top = styleMap({ top: `${(m.y / h) * 100}%` });
        const text = m.text ? html`<b>${m.text}</b>` : "";
        if (m.tone) return html`<div class="mark boxed bg-${m.tone}" style=${top}>${text}</div>`;
        return side === "left"
          ? html`<div class="mark" style=${top}>${text}<i></i></div>`
          : html`<div class="mark" style=${top}><i></i>${text}</div>`;
      })}
    </div>`;
  }

  private legend(kind: string, items: Item[]) {
    return html`<div class="legend ${kind}">${items.map(([t, c]) => html`<span class=${c}>${t}</span>`)}</div>`;
  }

  private grid(top: number, bottom: number) {
    return svg`<path d=${DAYS.map((x) => `M${x + 0.5} ${top}V${bottom}`).join("")} stroke="#4a4a4a" fill="none"
      stroke-dasharray="9 3 3 3 3 3" stroke-dashoffset="19"></path>`;
  }

  private curve(p: Pt[] | string, color: string, dash = "none", w = 1) {
    return svg`<path d=${typeof p === "string" ? p : path(p)} fill="none" stroke=${color} stroke-width=${w} stroke-dasharray=${dash}></path>`;
  }

  private flat(y: number, color: string, dash = "none", to = 1626) {
    return svg`<path d="M0 ${y + 0.5}H${to}" stroke=${color} stroke-dasharray=${dash}></path>`;
  }

  private plot(h: number, body: unknown) {
    return html`<svg viewBox="0 0 1760 ${h}" preserveAspectRatio="none" shape-rendering="crispEdges" aria-hidden="true">${body}</svg>`;
  }

  private pricePane() {
    const body = svg`
      ${this.grid(19, 465)}
      <path d=${SESSIONS.map((x) => `M${x + 0.5} 19V465`).join("")} stroke="#8c8c8c" stroke-dasharray="3 3"></path>
      ${this.flat(389, "#808000", "4 3", 1756)}
      ${this.curve(CLOSE, "#6666ff")}
      <path d="M0.500 346V358" stroke="#6666ff"></path>
      ${this.curve(NO_LAG, "#0000ff", "none", 2)}
      ${this.curve(CENTERED, "#ffff00")}
      ${HIGH_RUNS.map((r) => svg`<path d=${squares(r)} fill="#f00"></path>`)}
      ${LOW_RUNS.map((r) => svg`<path d=${squares(r)} fill="#0f0"></path>`)}
      <path d=${squares(CLOSE)} fill="#0ff"></path>
      ${SELLS.map((t) => svg`
        <path d="M${t.x - 2} ${t.tip - 16}h4v10h3l-5 6l-5-6h3z" fill="#f00"></path>
        <path d="M${t.tri[0]} ${t.tri[1] - 3}v6l5-3z" fill="#f00"></path>`)}
      ${BUYS.map((t) => svg`
        <path d="M${t.x - 2} ${t.tip + 13}v-8h-3l4-5h1l4 5h-3v8z" fill="#0f0"></path>
        <path d="M${t.tri[0]} ${t.tri[1] - 3}v6l5-3z" fill="#0f0"></path>`)}
      <path d=${CYCLES.map((x) => `M${x + 0.5} 19V466`).join("")} stroke="#008080"></path>
    `;
    return html`<div class="pane">
      ${this.plot(468, body)}
      ${this.legend("price", PRICE_HEAD)}
      ${[...SELLS, ...BUYS].map((t) => html`<span class="note" style=${styleMap({ left: `${(t.x / 1760) * 100}%`, top: `${(t.ly / 468) * 100}%` })}>${t.label}</span>`)}
      <span class="level" style=${styleMap({ top: `${(389 / 468) * 100}%` })}>3945.25</span>
    </div>`;
  }

  private macdPane() {
    const body = svg`
      ${this.grid(19, 213)}
      ${this.flat(21, "#f00")}${this.flat(66, "#660")}${this.flat(155, "#660")}${this.flat(199, "#f00")}
      ${this.flat(105, "#800080")}${this.flat(110, "#00f", "3 3")}
      ${this.curve(CYCLE, "#008080")}
      ${this.curve(LEAD, "#ffff00", "3 4")}
      ${this.curve(SLOW, "#ffff00")}
      ${this.curve(LEO, "#00ffff")}
      ${TRENDS.map((t) => this.curve(t, "#ff00ff"))}
    `;
    return html`<div class="pane">${this.plot(216, body)}${this.legend("macd", MACD_HEAD)}</div>`;
  }

  private cciPane() {
    const body = svg`
      ${this.grid(19, 213)}
      ${this.curve(CCI_BARS, "#404040")}
      ${this.flat(49, "#808080")}${this.flat(183, "#808080")}${this.flat(116, "#800080")}
      ${this.curve(SWING, "#cc6600", "3 4")}
      ${this.curve(FAST, "#ff0000", "3 4")}
      ${this.curve(STOCH, "#0000ff")}
      ${this.curve(CCI_MID, "#a6a6a6")}${this.curve(CCI_HIGH, "#ff0000")}${this.curve(CCI_LOW, "#00ffff")}
      ${TOP_DOTS.map(([x, y]) => svg`<circle cx=${x} cy=${y} r="4" fill="#0ff"></circle>`)}
      ${LOW_DOTS.map(([x, y]) => svg`<circle cx=${x} cy=${y} r="4" fill="#f00"></circle>`)}
    `;
    return html`<div class="pane">${this.plot(216, body)}${this.legend("cci", CCI_HEAD)}</div>`;
  }

  private timeAxis() {
    const at = (x: number) => styleMap({ left: `${(x / 1760) * 100}%` });
    return html`<div class="time">
      ${MINOR.map((x) => html`<i style=${at(x)}></i>`)}
      ${MAJOR.map((x) => html`<i class="major" style=${at(x)}></i>`)}
      ${DATES.map(([x, t]) => html`<span style=${at(x)}>${t}</span>`)}
    </div>`;
  }

  render(): TemplateResult {
    const arrows = ["M10 3v9L6 7.500zM4 3h1v9H4z", "M9 3v9L5 7.500z", "M6 3v9l4-4.500z", "M5 3v9l4-4.500zM10 3h1v9h-1z"];
    const names = ["First sheet", "Previous sheet", "Next sheet", "Last sheet"];
    return html`<div class="app">
      <header class="title">
        <svg class="logo" width="17" height="23" viewBox="0 0 17 23" aria-hidden="true">
          <path d="M3 21C-1 16-1 8 3 4c4-5 13-4 13 3 0 2 0 4-1 5l-3 1v6l-3 2-2-1-1-6-2 2z" fill="#1d55c8"></path>
          <path d="M2 15C1 9 4 3 9 2c4 0 6 2 6 6" fill="none" stroke="#55aaf4" stroke-width="2"></path>
          <path d="M8 21l-1-9H5l4-5 4 5h-2l-1 9z" fill="#f4faff"></path>
        </svg>
        <span class="name">TradeStation 8.1 - SP500_NASDAQ - SP500_TF30 - [Chart Analysis - GS:S&amp;P500  30 min  [CME] S&amp;P500 FUT]</span>
        <div class="caption">
          <button aria-label="Minimize"><svg width="20" height="18"><rect x="2.500" y="10.500" width="15" height="4" fill="#fff" stroke="#44546a"></rect></svg></button>
          <button aria-label="Restore"><svg width="20" height="20"><path d="M6.500 2.500h12v11h-12zM2.500 6.500h11v11h-11z" fill="#f4f4f4" stroke="#44546a"></path><rect x="6.500" y="10.500" width="4" height="3" fill="#7d95b0" stroke="#44546a"></rect></svg></button>
          <button class="close" aria-label="Close"><svg width="20" height="18"><path d="M4 3l12 12M16 3L4 15" stroke="#5a3a3a" stroke-width="6"></path><path d="M4 3l12 12M16 3L4 15" stroke="#fff" stroke-width="4"></path></svg></button>
        </div>
      </header>

      <div class="menubar">
        <svg class="app-icon" width="19" height="17" viewBox="0 0 19 17" shape-rendering="crispEdges" aria-hidden="true">
          <path d="M0 0h19v17H0z" fill="#000"></path><path d="M0 0h18v2H0z" fill="#0020e0"></path>
          <path d="M1 13h17M17.500 3v10" stroke="#800"></path>
          <path d="M2.500 8v3M4.500 6v4M6.500 7v4M8.500 5v4M10.500 7v2M12.500 3v5M14.500 5v3" stroke="#0c0"></path>
        </svg>
        <nav>${MENU.map((m) => html`<button>${m}</button>`)}</nav>
        <div class="mdi">${this.mdi()}</div>
      </div>

      <div class="tools">
        <div class="grip"></div>
        ${this.groups(TOOLS_A)}
        <div class="sep"></div>
        <div class="combo">
          <select aria-label="Symbol"><option></option></select>
          <svg width="10" height="6"><path d="M0 0h9L4.500 5z" fill="#000"></path></svg>
        </div>
        <button class="tool play" aria-label="Go"><svg width="6" height="10"><path d="M0 0v9l5-4.500z" fill="#000"></path></svg></button>
        <button class="tool find" aria-label="Find symbol">${this.icon("find", 18)}</button>
        <div class="grip gap-b"></div>
        ${this.groups(TOOLS_B)}
        <div class="grip gap-c"></div>
        ${this.groups(TOOLS_C)}
      </div>

      <main class="chart">
        ${this.axis("left", PRICE_L, 468, false)}${this.pricePane()}${this.axis("right", PRICE_R, 468, false)}
        ${this.axis("left", MACD_L, 216, true)}${this.macdPane()}${this.axis("right", MACD_R, 216, true)}
        ${this.axis("left", CCI_L, 216, true)}${this.cciPane()}${this.axis("right", CCI_R, 216, true)}
        <div class="corner"></div>${this.timeAxis()}<div class="corner"></div>
        <div class="clip"><div class="mdi floating">${this.mdi()}</div></div>
      </main>

      <div class="scroll">
        <button aria-label="Scroll left"><svg width="6" height="9"><path d="M5 0v9L0 4.500z" fill="#444"></path></svg></button>
        <input type="range" aria-label="Chart position" min="0" max="100" .value=${"100"} />
        <button aria-label="Scroll right"><svg width="6" height="9"><path d="M0 0v9l5-4.500z" fill="#444"></path></svg></button>
      </div>

      <div class="sheets">
        ${arrows.map((d, i) => html`<button class="nav" aria-label=${names[i]}><svg width="15" height="15"><path d=${d} fill="#555"></path></svg></button>`)}
        <div class="tabs">${SHEETS.map((s) => html`<button class="tab ${s === "SP500_TF30" ? "on" : ""}">${s}</button>`)}</div>
      </div>

      <footer class="status">
        <span>For Help, press F1</span>
        <span>Acct:</span><span>Open Psns:</span><span>DT BP:</span><span>Purch Pwr:</span><span>Closed P/L:</span>
        <span>RT TE:</span><span>Open P/L:</span><span class="ok">ORDER BAR</span><span class="ok">MACROS</span>
        <span class="bead"><svg width="12" height="13"><circle cx="6" cy="6" r="5" fill="#d00" stroke="#400"></circle><circle cx="4.500" cy="4" r="1.500" fill="#fbb"></circle></svg></span>
        <span>08/12/2022 14:47</span>
      </footer>
    </div>`;
  }
}
